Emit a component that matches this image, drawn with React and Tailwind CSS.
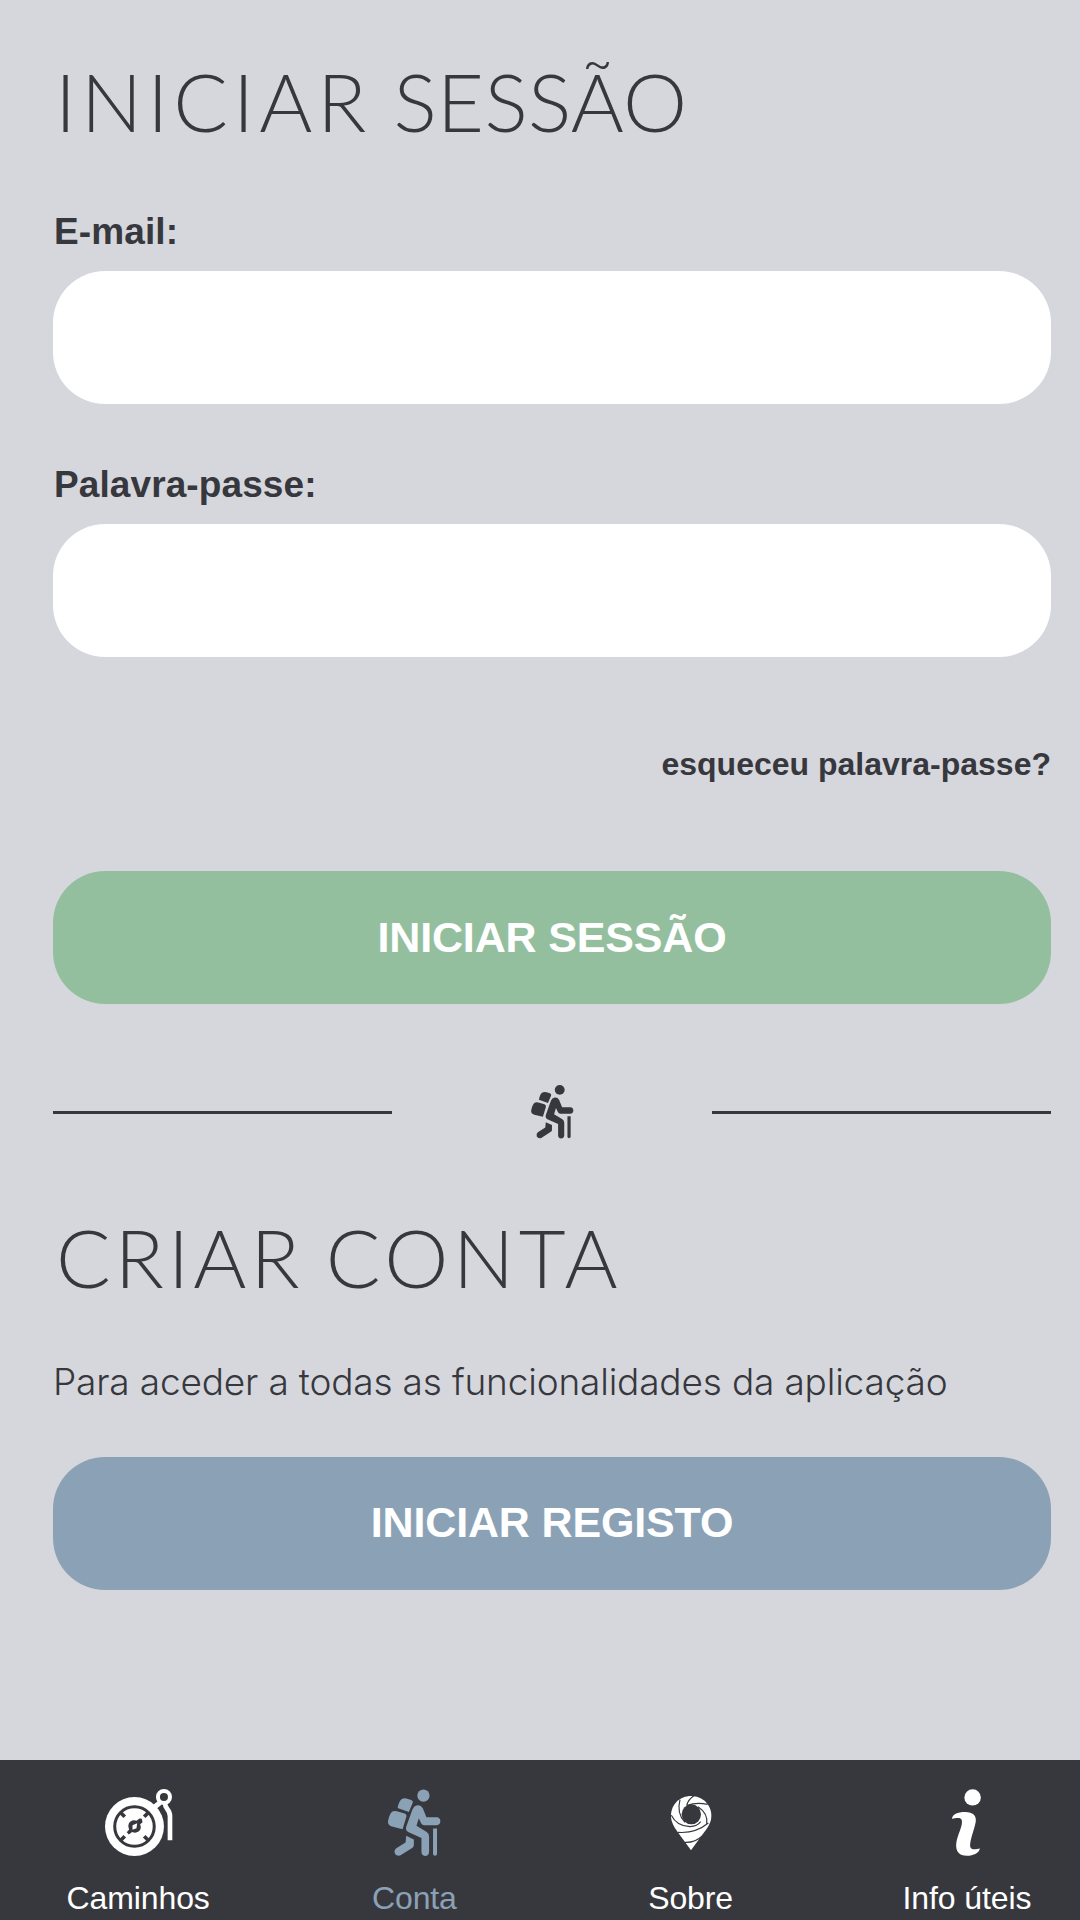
function HikerIcon({ className }) {
  return (
    <svg className={className} viewBox="140 84 166 206" fill="currentColor">
      <circle cx="250" cy="106" r="18.5" />
      <path d="M172 143 Q176 122 185 116 Q192 112 201 115 L213 119 Q219 121 218 127 L206 155 Z" />
      <path d="M143 184 Q147 161 156 154 Q162 151 170 153 L193 160 Q201 163 198 171 L187 207 L155 199 Q142 195 143 184 Z" />
      <path d="M231 135 Q242 133 248 144 L259 171 H290 Q301 172 301 183 Q301 194 290 195 H252 Q246 195 243 189 L236 174 L229 197 L260 216 Q267 221 267 230 V276 Q266 288 255 288 Q244 287 244 276 V234 L204 216 Q195 211 198 200 L217 147 Q221 137 231 135 Z" />
      <path d="M198 227 L221 238 V256 Q221 260 217 263 L181 286 Q170 290 164 281 Q160 272 168 265 L196 247 Z" />
      <path d="M279 205 H291 V282 Q290 287 285 287 Q279 287 279 282 Z" />
    </svg>
  );
}

function CompassIcon({ className }) {
  return (
    <svg className={className} viewBox="132 84 206 206" fill="none">
      <circle cx="223" cy="199" r="88" fill="currentColor" />
      <circle cx="223" cy="199" r="59" stroke="#37383e" strokeWidth="9" />
      <path
        d="M182 158 L194 170 M264 158 L252 170 M182 240 L194 228 M264 240 L252 228"
        stroke="#37383e"
        strokeWidth="11"
      />
      <path d="M245 176 L247 186 L240 192 Q245 207 235 214 Q226 220 216 215 L206 223 L200 216 L207 208 Q201 194 210 185 Q220 178 229 182 L238 175 Z" fill="#37383e" />
      <path d="M231 189 L229 204 L217 209 L217 195 Z" fill="currentColor" />
      <circle cx="311" cy="111" r="18" stroke="currentColor" strokeWidth="12" />
      <path d="M299 128 L284 140" stroke="currentColor" strokeWidth="15" />
      <path d="M314 129 Q314 139 321 147 Q329 156 329 168 V240" stroke="currentColor" strokeWidth="14" />
    </svg>
  );
}

function PinIcon({ className }) {
  return (
    <svg className={className} viewBox="152 104 126 168" fill="none">
      <path
        d="M215 107 C182 107 155 132 155 166 C155 185 164 199 175 215 L215 270 L255 215 C268 197 276 185 276 166 C276 132 248 107 215 107 Z"
        fill="currentColor"
      />
      <ellipse cx="216" cy="162" rx="29" ry="30" fill="#37383e" />
      <path
        d="M182 118 Q171 160 197 186 M202 136 Q206 117 224 106 M204 135 Q230 125 265 132 M236 139 Q268 160 262 192 M156 165 Q172 198 212 199 Q234 198 244 184 M176 216 Q228 220 267 188 M196 246 Q226 248 249 227"
        stroke="#37383e"
        strokeWidth="3.5"
      />
    </svg>
  );
}

function InfoIcon({ className }) {
  return (
    <svg className={className} viewBox="216 84 94 206" fill="currentColor">
      <ellipse cx="281.5" cy="111" rx="25" ry="24.5" />
      <path d="M219 176 C219 163 236 155 259 155 C282 155 294 166 291 185 C287 209 273 240 274 259 C276 272 293 269 303 265 C304 278 284 288 264 288 C241 288 229 274 232 250 C235 224 252 199 249 181 C246 169 229 175 219 176 Z" />
    </svg>
  );
}

function Field({ label, type, className }) {
  return (
    <label className={`block ${className}`}>
      <span className="block h-[50px] pl-px text-[37px] leading-[52px] font-bold tracking-[0.1px]">{label}</span>
      <input type={type} className="mt-[15px] block h-[133px] w-full rounded-[52px] bg-white px-10 text-4xl outline-none" />
    </label>
  );
}

const tabs = [
  { label: 'Caminhos', Icon: CompassIcon, size: 'w-[69px] h-[69px]' },
  { label: 'Conta', Icon: HikerIcon, size: 'w-[55px] h-[69px]', active: true },
  { label: 'Sobre', Icon: PinIcon, size: 'w-[42px] h-[56px]' },
  { label: 'Info úteis', Icon: InfoIcon, size: 'w-[31px] h-[69px]' },
];

export default function App() {
  return (
    <div className="h-[1920px] w-full overflow-hidden bg-[#d6d7dc] font-['Liberation_Sans',Arial,sans-serif] text-[#37383e]">
      <div className="flex h-full w-[1105px] flex-col">
        <main className="flex h-[1760px] flex-col pr-[54px] pl-[53px]">
          <h1 className="mt-[52px] h-[100px] pl-[2px] font-['Lato',sans-serif] text-[81px] leading-[97px] font-light whitespace-nowrap">
            <span className="tracking-[5px]">INICIAR</span> <span className="tracking-[0.3px]">SESSÃO</span>
          </h1>
          <Field label="E-mail:" type="email" className="mt-[54px]" />
          <Field label="Palavra-passe:" type="password" className="mt-[55px]" />

          <a href="#" className="mt-[87px] h-10 self-end text-[32px] leading-10 font-bold whitespace-nowrap">
            esqueceu palavra-passe?
          </a>
          <button className="mt-[87px] h-[133px] shrink-0 rounded-[52px] bg-[#94bf9f] text-[43px] font-bold tracking-[-0.15px] text-white">
            INICIAR SESSÃO
          </button>

          <div className="mt-[80px] flex h-[57px] items-center justify-between">
            <div className="h-[3px] w-[339px] bg-[#37383e]" />
            <HikerIcon className="mb-[2px] h-[55px] w-[45px]" />
            <div className="h-[3px] w-[339px] bg-[#37383e]" />
          </div>

          <h2 className="mt-[67px] h-[100px] pl-[3px] font-['Lato',sans-serif] text-[81px] leading-[97px] font-light whitespace-nowrap">
            <span className="tracking-[4.1px]">CRIAR</span> <span className="tracking-[4.6px]">CONTA</span>
          </h2>
          <p className="mt-[50px] h-[50px] font-['Inter',sans-serif] text-[37px] leading-[48px] font-light tracking-[-0.17px] whitespace-nowrap">
            Para aceder a todas as funcionalidades da aplicação
          </p>
          <button className="mt-[49px] h-[133px] shrink-0 rounded-[52px] bg-[#8ba2b6] pb-[2px] text-[43px] font-bold tracking-[-0.15px] text-white">
            INICIAR REGISTO
          </button>
        </main>

        <nav className="grid h-[160px] grid-cols-4 bg-[#37383e] text-white">
          {tabs.map(({ label, Icon, size, active }) => (
            <a key={label} href="#" className={`flex flex-col items-center ${active ? 'text-[#8ba2b6]' : ''}`}>
              <div className="mt-[28px] flex h-[69px] items-center">
                <Icon className={size} />
              </div>
              <span className="mt-[21px] text-[32px] leading-[40px] tracking-[-0.1px] whitespace-nowrap">{label}</span>
            </a>
          ))}
        </nav>
      </div>
    </div>
  );
}
